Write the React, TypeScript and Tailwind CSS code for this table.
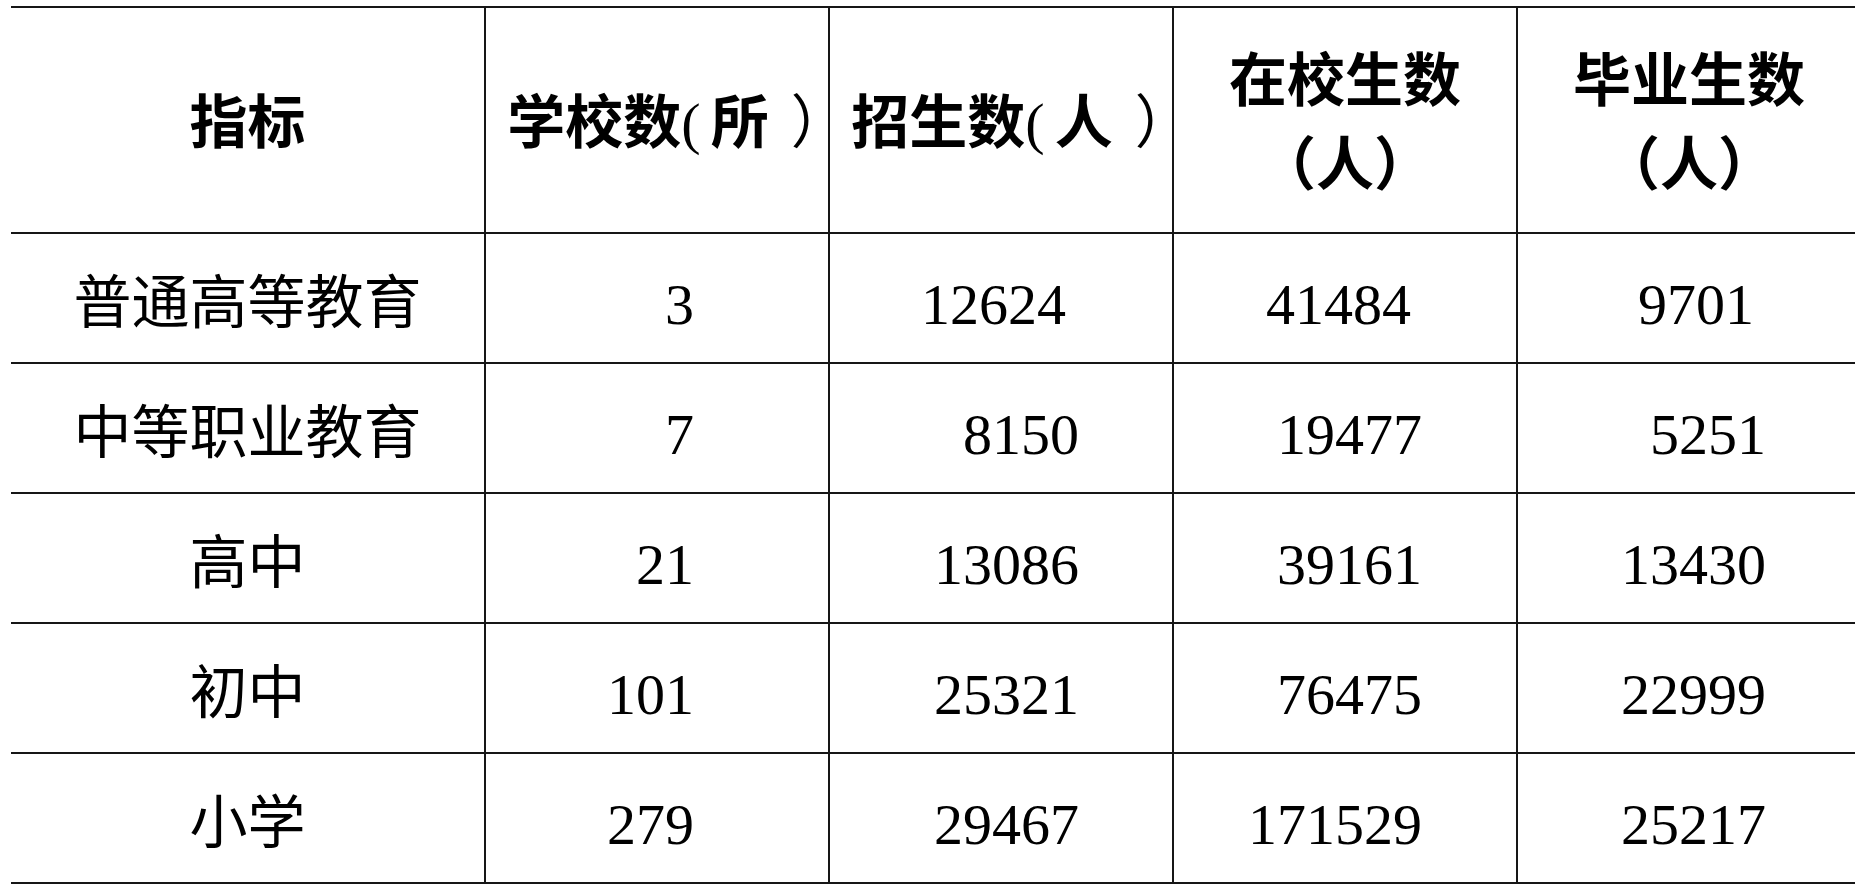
const FONT = "font-['Liberation_Serif','Noto_Sans_CJK_SC',serif]";

type Head = { lines: string[]; unit?: string };

const HEADERS: Head[] = [
  { lines: ["指标"] },
  { lines: ["学校数"], unit: "所" },
  { lines: ["招生数"], unit: "人" },
  { lines: ["在校生数", "（人）"] },
  { lines: ["毕业生数", "（人）"] },
];

// right padding per column keeps the numbers lined up the way the source sheet has them
const ROWS: { label: string; values: string[]; first?: boolean }[] = [
  { label: "普通高等教育", values: ["3", "12624", "41484", "9701"], first: true },
  { label: "中等职业教育", values: ["7", "8150", "19477", "5251"] },
  { label: "高中", values: ["21", "13086", "39161", "13430"] },
  { label: "初中", values: ["101", "25321", "76475", "22999"] },
  { label: "小学", values: ["279", "29467", "171529", "25217"] },
];

const PAD_FIRST = ["pr-[134px]", "pr-[106px]", "pr-[105px]", "pr-[106px]"];
const PAD_REST = ["pr-[134px]", "pr-[93px]", "pr-[94px]", "pr-[94px]"];

export default function App() {
  return (
    <div className={`w-[1855px] h-[889px] overflow-hidden bg-white text-black ${FONT}`}>
      <div className="pl-[11px] pt-[6px]">
        <div className="grid w-[1849px] grid-cols-[473px_344px_344px_344px_344px] border-t-2 border-[#161616]">
          {HEADERS.map((h, i) => (
            <div
              key={i}
              className={`flex h-[226px] flex-col items-center justify-center border-b-2 border-[#161616] pt-[8px] text-[58px] font-bold leading-[84px] whitespace-nowrap ${
                i > 0 ? "border-l-2" : ""
              } ${h.unit ? "pl-[42px]" : ""}`}
            >
              {h.lines.map((l) => (
                <span key={l}>
                  {l}
                  {h.unit && (
                    <>
                      <span className="font-normal">(</span>
                      <span className="ml-[10px]">{h.unit}</span>
                      <span className="ml-[22px] font-normal">）</span>
                    </>
                  )}
                </span>
              ))}
            </div>
          ))}

          {ROWS.map((row) => (
            <div key={row.label} className="contents">
              <div className="flex h-[130px] items-center justify-center border-b-2 border-[#161616] pt-[12px] text-[58px] leading-none whitespace-nowrap">
                {row.label}
              </div>
              {row.values.map((v, j) => (
                <div
                  key={j}
                  className={`flex h-[130px] items-center justify-end border-b-2 border-l-2 border-[#161616] pt-[14px] text-[58px] leading-none ${
                    row.first ? PAD_FIRST[j] : PAD_REST[j]
                  }`}
                >
                  {v}
                </div>
              ))}
            </div>
          ))}
        </div>
      </div>
    </div>
  );
}
